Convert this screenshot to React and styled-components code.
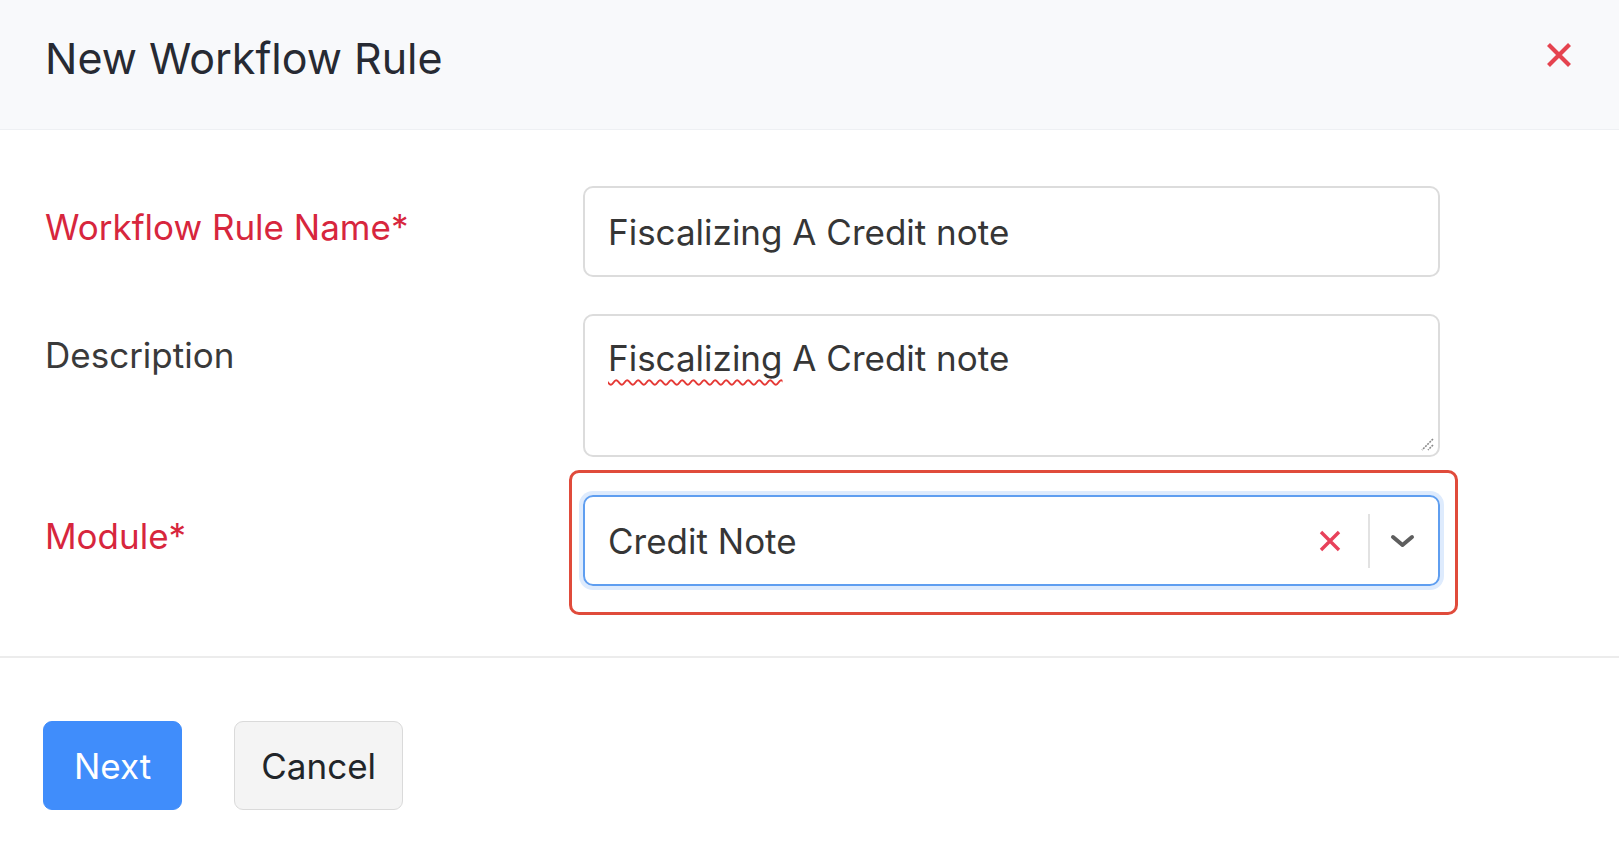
import styled, { createGlobalStyle } from "styled-components";

const GlobalStyle = createGlobalStyle`
    * {
        box-sizing: border-box;
    }

    body {
        margin: 0;
        background: #ffffff;
        font-family: Inter, "Noto Sans", sans-serif;
        color: #333333;
    }
`;

const Modal = styled.div`
    width: 100%;
    min-height: 100vh;
    background: #ffffff;
`;

const Header = styled.header`
    height: 130px;
    display: flex;
    justify-content: space-between;
    align-items: flex-start;
    padding: 32px 46px 0 45px;
    background: #f8f9fb;
    border-bottom: 1px solid #eef0f3;
`;

const Title = styled.h1`
    margin: 0;
    font-size: 43px;
    font-weight: 400;
    line-height: normal;
    color: #272a33;
`;

const CloseButton = styled.button`
    margin-top: 9px;
    padding: 0;
    border: 0;
    background: none;
    display: flex;
    cursor: pointer;
`;

const Body = styled.div`
    padding: 56px 0 70px 45px;
    display: grid;
    grid-template-columns: 538px 857px;
    row-gap: 37px;
`;

const Label = styled.label`
    padding-top: 19px;
    font-size: 35px;
    line-height: 44px;
    color: ${({ $required }) => ($required ? "#d7263d" : "#3a3a3a")};
`;

const TextInput = styled.input`
    width: 100%;
    height: 91px;
    padding: 0 23px;
    border: 2px solid #dcdcdc;
    border-radius: 10px;
    font-family: inherit;
    font-size: 35px;
    line-height: 44px;
    color: #363636;
    background: #ffffff;
    outline: none;
`;

const TextBox = styled.div`
    position: relative;
    height: 143px;
    margin-bottom: 1px;
    padding: 20px 23px;
    border: 2px solid #dcdcdc;
    border-radius: 10px;
    font-size: 35px;
    line-height: 44px;
    color: #363636;
`;

const Misspelled = styled.span`
    text-decoration: underline wavy #e53935;
    text-decoration-thickness: 2px;
    text-underline-offset: 8px;
`;

const Grip = styled.svg`
    position: absolute;
    right: 3px;
    bottom: 3px;
`;

const Highlight = styled.div`
    position: relative;

    &::before {
        content: "";
        position: absolute;
        inset: -25px -18px -29px -14px;
        border: 3px solid #e04b3b;
        border-radius: 10px;
        pointer-events: none;
    }
`;

const Select = styled.div`
    height: 91px;
    display: flex;
    align-items: center;
    padding: 0 23px;
    border: 2px solid #5f9ef0;
    border-radius: 10px;
    box-shadow: 0 0 0 4px #deebfd;
    font-size: 35px;
    line-height: 44px;
    color: #363636;
`;

const SelectValue = styled.span`
    flex: 1;
`;

const SelectDivider = styled.span`
    width: 2px;
    height: 54px;
    margin: 0 20px 0 26px;
    background: #e2e2e2;
`;

const Divider = styled.hr`
    margin: 0;
    border: 0;
    border-top: 2px solid #ececec;
`;

const Footer = styled.div`
    display: flex;
    gap: 52px;
    padding: 63px 45px 0 43px;
`;

const Button = styled.button`
    height: 89px;
    padding: 0 ${({ $primary }) => ($primary ? "30px" : "26px")};
    border: 1px solid ${({ $primary }) => ($primary ? "#408dfb" : "#dadada")};
    border-radius: 9px;
    background: ${({ $primary }) => ($primary ? "#408dfb" : "#f4f4f4")};
    color: ${({ $primary }) => ($primary ? "#ffffff" : "#212529")};
    font-family: inherit;
    font-size: 35px;
    cursor: pointer;
`;

const XIcon = ({ size, stroke, color }) => (
    <svg width={size} height={size} viewBox="0 0 24 24">
        <path d="M3 3L21 21M21 3L3 21" stroke={color} strokeWidth={stroke} strokeLinecap="butt" fill="none" />
    </svg>
);

const Chevron = () => (
    <svg width="25" height="16" viewBox="0 0 25 16">
        <path d="M3 4L12.5 12L22 4" stroke="#5e5e5e" strokeWidth="4" fill="none" strokeLinecap="round" strokeLinejoin="round" />
    </svg>
);

const App = () => {
    return (
        <Modal>
            <GlobalStyle />
            <Header>
                <Title>New Workflow Rule</Title>
                <CloseButton aria-label="Close">
                    <XIcon size={28} stroke={3.6} color="#e5434f" />
                </CloseButton>
            </Header>

            <Body>
                <Label $required>Workflow Rule Name*</Label>
                <TextInput defaultValue="Fiscalizing A Credit note" />

                <Label>Description</Label>
                <TextBox>
                    <Misspelled>Fiscalizing</Misspelled> A Credit note
                    <Grip width="18" height="18" viewBox="0 0 18 18">
                        <path d="M16 5L5 16M16 11L11 16" stroke="#8a8a8a" strokeWidth="1.6" strokeDasharray="2 1" />
                    </Grip>
                </TextBox>

                <Label $required>Module*</Label>
                <Highlight>
                    <Select>
                        <SelectValue>Credit Note</SelectValue>
                        <XIcon size={24} stroke={3.4} color="#e8415a" />
                        <SelectDivider />
                        <Chevron />
                    </Select>
                </Highlight>
            </Body>

            <Divider />

            <Footer>
                <Button $primary>Next</Button>
                <Button>Cancel</Button>
            </Footer>
        </Modal>
    );
};

export default App;
